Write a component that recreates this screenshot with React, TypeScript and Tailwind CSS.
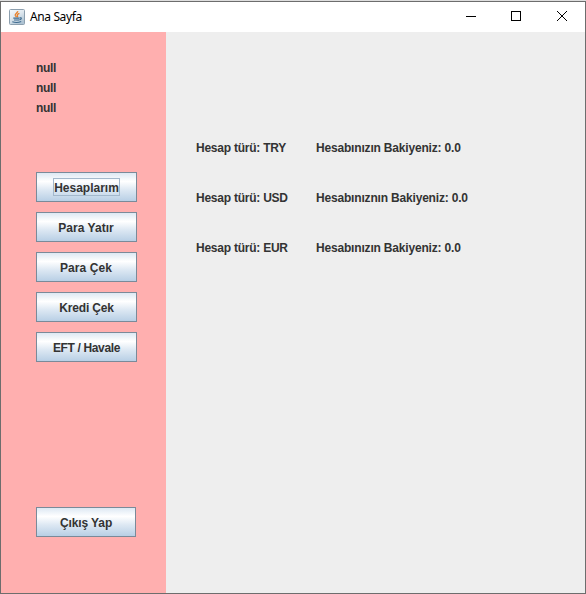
import React from "react";

function JavaIcon() {
  return (
    <svg width="16" height="16" viewBox="0 0 16 16" className="block shrink-0">
      <defs>
        <linearGradient id="tile" x1="0" y1="0" x2="0.6" y2="1">
          <stop offset="0" stopColor="#f6f9fb" />
          <stop offset="0.5" stopColor="#dfe8ef" />
          <stop offset="1" stopColor="#aec3d3" />
        </linearGradient>
      </defs>
      <rect x="0.5" y="0.5" width="15" height="15" rx="1" fill="url(#tile)" stroke="#8c9fae" />
      <path d="M8.700 2.200C9 4 5.600 4.800 6.300 6.500c.3.6 1 1 1 1.700M10.400 4.300C8.800 5 7.800 5.700 8.400 6.600c.4.6.3 1.100-.2 1.600" fill="none" stroke="#e8812c" strokeWidth="1.400" />
      <path d="M4.300 9.100h6.200M5 11h5.200M10.800 8.800c2.200-.5 2 1.500-.3 2M3.300 12.800c2.300.8 6.400.8 8.900-.2" fill="none" stroke="#3f6b8f" strokeWidth="1.100" />
    </svg>
  );
}

const buttonBase =
  "flex h-[30px] items-center justify-center border border-[#7a8a99] bg-[linear-gradient(180deg,#dde8f3_0%,#ffffff_30%,#dde8f3_60%,#b8cfe5_100%)] text-[12px] leading-[16px] font-bold text-[#333333]";

const actions = [
  { label: "Hesaplarım", focused: true, spacing: "" },
  { label: "Para Yatır", focused: false, spacing: "tracking-[0.05px] pr-px" },
  { label: "Para Çek", focused: false, spacing: "tracking-[0.08px] pr-px" },
  { label: "Kredi Çek", focused: false, spacing: "tracking-[-0.15px]" },
  { label: "EFT / Havale", focused: false, spacing: "tracking-[-0.35px]" },
];

const accounts = [
  { type: "Hesap türü: TRY", balance: "Hesabınızın Bakiyeniz: 0.0" },
  { type: "Hesap türü: USD", balance: "Hesabınıznın Bakiyeniz: 0.0" },
  { type: "Hesap türü: EUR", balance: "Hesabınızın Bakiyeniz: 0.0" },
];

export default function App() {
  return (
    <div className="h-[594px] w-[586px] overflow-hidden bg-[#dedede] pt-px font-['Liberation_Sans',Arial,sans-serif]">
      <div className="flex h-[593px] flex-col border border-[#6d6d6d] bg-white">
        <header className="flex h-[30px] shrink-0 items-center justify-between pl-2">
          <div className="flex items-center gap-[5px]">
            <JavaIcon />
            <span className="font-['Noto_Sans',sans-serif] text-[12px] leading-[16px] tracking-[-0.38px] text-black">Ana Sayfa</span>
          </div>
          <svg width="138" height="30" viewBox="0 0 138 30" fill="none" stroke="#000" className="block">
            <path d="M19 14.500h10" shapeRendering="crispEdges" />
            <rect x="64.500" y="9.500" width="9" height="9" shapeRendering="crispEdges" />
            <path d="M110 9l10 10M120 9l-10 10" />
          </svg>
        </header>
        <div className="flex flex-1">
          <aside className="flex w-[165px] flex-col bg-[#ffafaf] pt-[26px] pl-[35px] text-[12px] font-bold text-[#333333]">
            <p className="h-5 leading-[20px] tracking-[-0.33px]">null</p>
            <p className="h-5 leading-[20px] tracking-[-0.33px]">null</p>
            <p className="h-5 leading-[20px] tracking-[-0.33px]">null</p>
            <nav className="mt-[54px] flex w-[101px] flex-col gap-[10px]">
              {actions.map((a) => (
                <button key={a.label} className={buttonBase}>
                  {a.focused ? (
                    <span className="flex h-[18px] w-[67px] items-center justify-center border border-[#a3b8cc] pt-0.5 whitespace-nowrap">{a.label}</span>
                  ) : (
                    <span className={`pt-0.5 ${a.spacing}`}>{a.label}</span>
                  )}
                </button>
              ))}
            </nav>
            <button className={`${buttonBase} mt-[145px] w-[100px]`}>
              <span className="pt-0.5 tracking-[-0.1px]">Çıkış Yap</span>
            </button>
          </aside>
          <main className="flex flex-1 flex-col gap-[30px] bg-[#eeeeee] pt-[106px] pl-[30px] text-[12px] leading-[20px] font-bold text-[#333333]">
            {accounts.map((a) => (
              <div key={a.type} className="flex h-5">
                <span className="w-[120px] tracking-[-0.24px]">{a.type}</span>
                <span className="tracking-[-0.18px]">{a.balance}</span>
              </div>
            ))}
          </main>
        </div>
      </div>
    </div>
  );
}
